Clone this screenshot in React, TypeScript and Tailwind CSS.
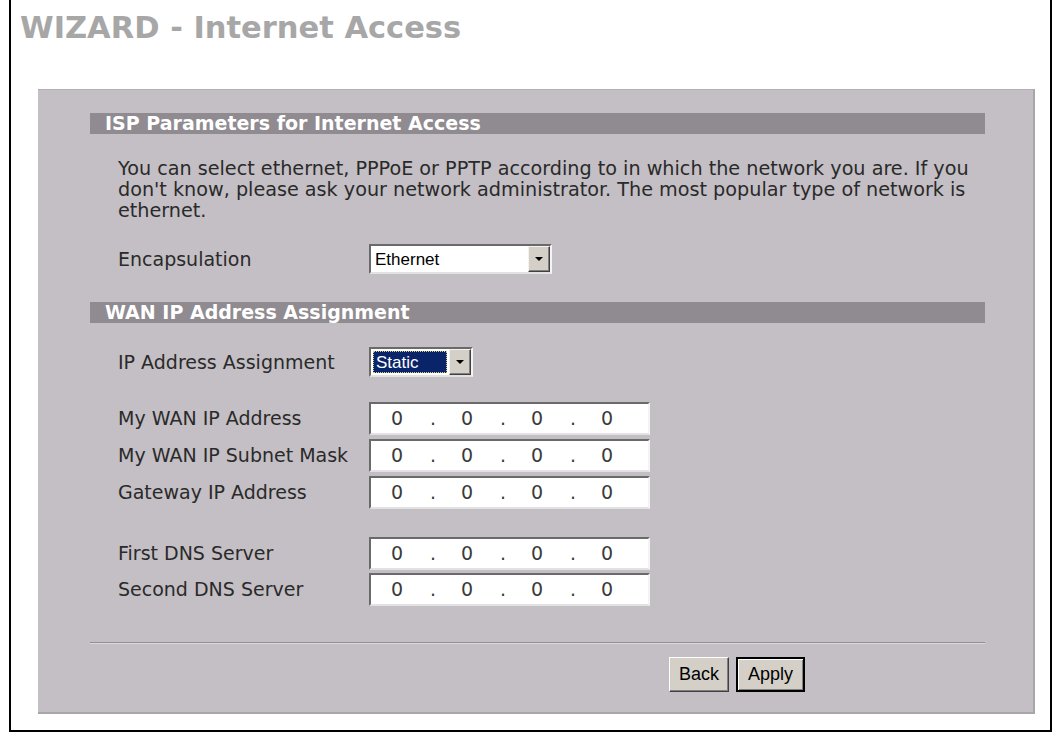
import type { ReactNode } from 'react'

function SectionBar({ children }: { children: ReactNode }) {
  return (
    <div className="h-[21px] bg-[#8f8b90] pl-[15px] text-[19px] font-bold leading-[21px] text-white">
      {children}
    </div>
  )
}

function Row({ label, children }: { label: string; children: ReactNode }) {
  return (
    <div className="flex items-center pl-[28px]">
      <div className="w-[251px] shrink-0">{label}</div>
      {children}
    </div>
  )
}

function ArrowButton() {
  return (
    <div className="flex h-[26px] w-[22px] items-center justify-center border border-t-[#f4f3ef] border-l-[#f4f3ef] border-r-[#404040] border-b-[#404040] bg-[#d4d0c8] shadow-[inset_-1px_-1px_0_#808080]">
      <svg width="8" height="4" viewBox="0 0 8 4">
        <path d="M0 0h8L4 4z" fill="#000" />
      </svg>
    </div>
  )
}

function IpBox() {
  return (
    <div className="flex h-[33px] w-[281px] items-center border-2 border-t-[#6a6a6a] border-l-[#6a6a6a] border-r-[#f4f4f4] border-b-[#e2e2e2] bg-white pl-[20px] text-[#3a3a3a]">
      {[0, 1, 2, 3].map((i) => (
        <div key={i} className="flex">
          <span className="w-[30px]">0</span>
          {i < 3 && <span className="w-[40px] pl-[9px]">.</span>}
        </div>
      ))}
    </div>
  )
}

export default function App() {
  return (
    <div className="h-[734px] w-[1057px] bg-white pl-[9px] font-['DejaVu_Sans',sans-serif]">
      <div className="flex h-[732px] w-[1043px] flex-col border-x-2 border-b-2 border-black">
        <h1 className="pl-[9px] pt-[10px] text-[30.5px] font-bold leading-[36px] text-[#a7a7a7]">
          WIZARD - Internet Access
        </h1>

        <div className="ml-[27px] mt-[43px] w-[997px] border-t border-r-2 border-b-2 border-t-[#b3b0b4] border-r-[#a7a7a7] border-b-[#a7a7a7] bg-[#c3bfc4] pb-[20px] pl-[52px] pr-[48px] pt-[23px] text-[19px] leading-[21px] text-[#2a2a2a]">
          <SectionBar>ISP Parameters for Internet Access</SectionBar>

          <p className="mt-[24px] whitespace-nowrap pl-[28px] text-[19.2px]">
            You can select ethernet, PPPoE or PPTP according to in which the network you are. If you
            <br />
            don't know, please ask your network administrator. The most popular type of network is
            <br />
            ethernet.
          </p>

          <div className="mt-[23px]">
            <Row label="Encapsulation">
              <div className="flex h-[30px] w-[183px] items-center justify-between border-2 border-t-[#6a6a6a] border-l-[#6a6a6a] border-r-[#f4f4f4] border-b-[#e2e2e2] bg-white pl-[4px] font-['Liberation_Sans',sans-serif] text-[17px] text-black">
                <span>Ethernet</span>
                <ArrowButton />
              </div>
            </Row>
          </div>

          <div className="mt-[28px]">
            <SectionBar>WAN IP Address Assignment</SectionBar>
          </div>

          <div className="mt-[24px]">
            <Row label="IP Address Assignment">
              <div className="flex h-[30px] w-[104px] items-center justify-between border-2 border-t-[#6a6a6a] border-l-[#6a6a6a] border-r-[#f4f4f4] border-b-[#e2e2e2] bg-white pl-[2px] font-['Liberation_Sans',sans-serif] text-[17px]">
                <span className="flex h-[22px] w-[74px] items-center border border-dotted border-[#d9d27a] bg-[#0a246a] pl-[2px] text-white">
                  Static
                </span>
                <ArrowButton />
              </div>
            </Row>
          </div>

          <div className="mt-[25px] flex flex-col gap-[4px]">
            <Row label="My WAN IP Address">
              <IpBox />
            </Row>
            <Row label="My WAN IP Subnet Mask">
              <IpBox />
            </Row>
            <Row label="Gateway IP Address">
              <IpBox />
            </Row>
          </div>

          <div className="mt-[28px] flex flex-col gap-[3px]">
            <Row label="First DNS Server">
              <IpBox />
            </Row>
            <Row label="Second DNS Server">
              <IpBox />
            </Row>
          </div>

          <div className="mt-[36px] h-[2px] border-t border-b border-t-[#8f8f8f] border-b-[#dcdadc]" />

          <div className="mt-[13px] flex gap-[7px] pl-[579px] font-['Liberation_Sans',sans-serif] text-[18px] text-black">
            <button className="h-[35px] w-[60px] border border-t-white border-l-white border-r-[#404040] border-b-[#404040] bg-[#d4d0c8] shadow-[inset_-1px_-1px_0_#808080]">
              Back
            </button>
            <button className="h-[35px] w-[69px] border-2 border-black bg-[#d4d0c8] shadow-[inset_1px_1px_0_#fff,inset_-1px_-1px_0_#808080]">
              Apply
            </button>
          </div>
        </div>
      </div>
    </div>
  )
}
